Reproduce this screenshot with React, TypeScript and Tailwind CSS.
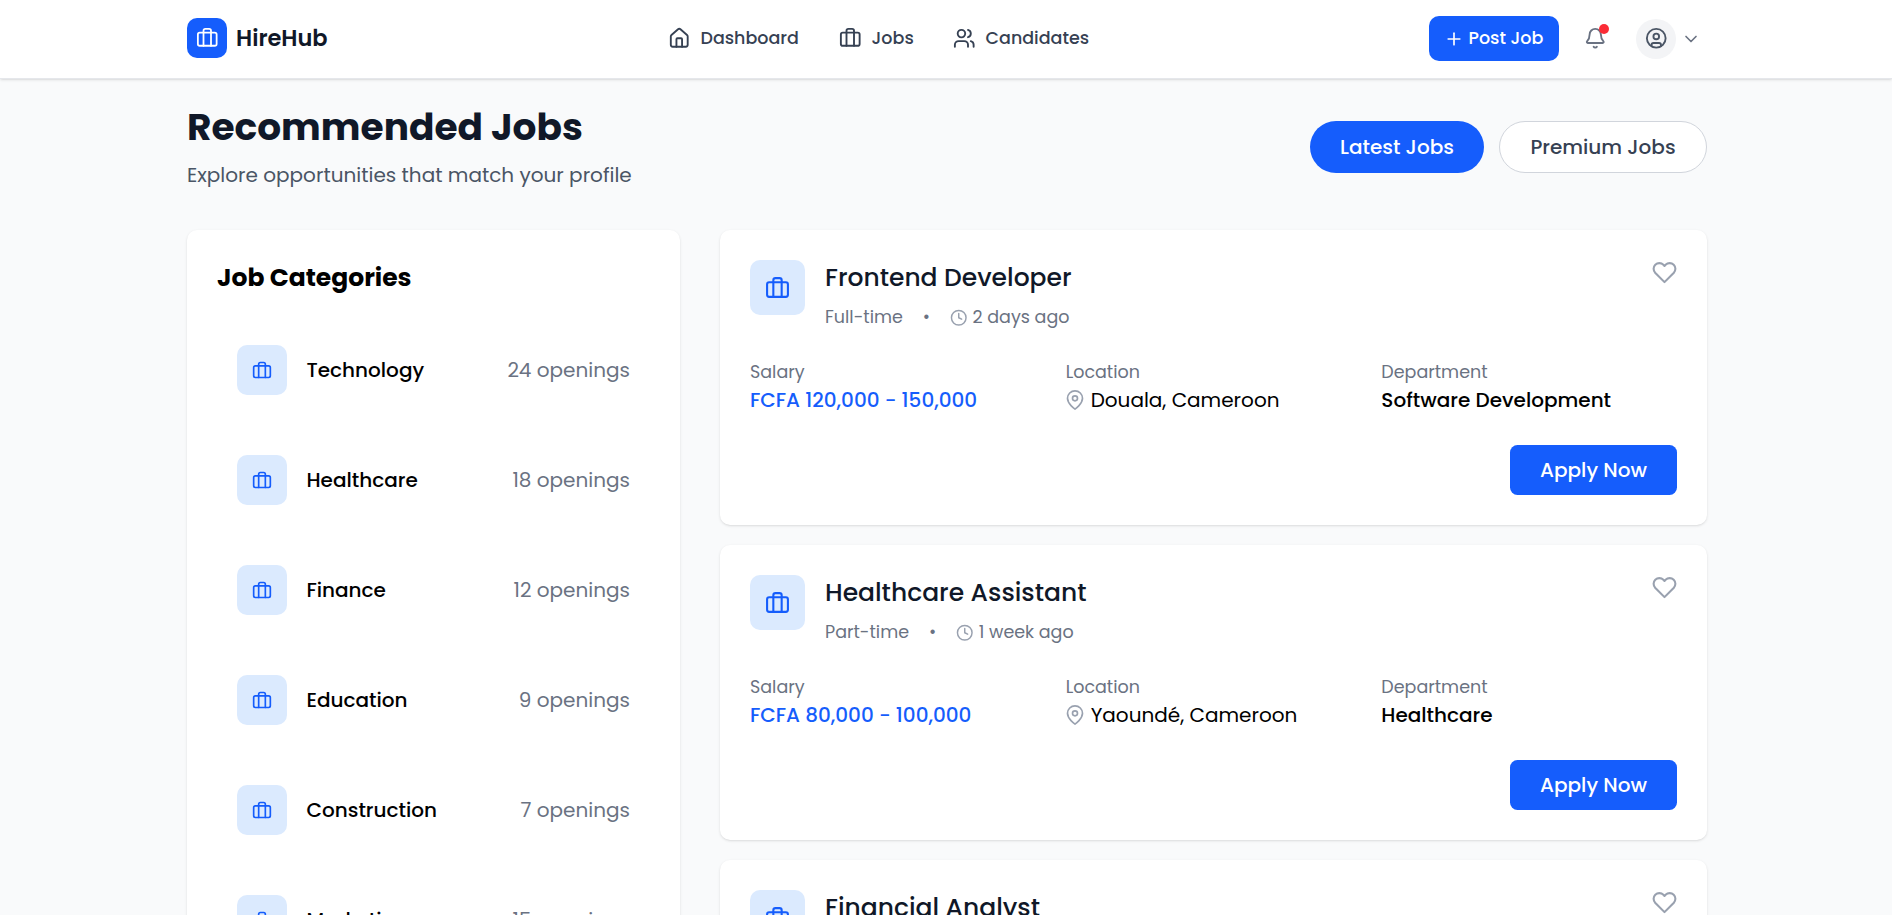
import { Bell, Briefcase, ChevronDown, CircleUser, House, Plus, Users } from "lucide-react";
import { FiBriefcase, FiClock, FiHeart, FiMapPin } from "react-icons/fi";

const categories = [
  { name: "Technology", count: "24 openings" },
  { name: "Healthcare", count: "18 openings" },
  { name: "Finance", count: "12 openings" },
  { name: "Education", count: "9 openings" },
  { name: "Construction", count: "7 openings" },
  { name: "Marketing", count: "15 openings" },
];

const jobs = [
  {
    title: "Frontend Developer",
    type: "Full-time",
    posted: "2 days ago",
    salary: "FCFA 120,000 - 150,000",
    location: "Douala, Cameroon",
    department: "Software Development",
  },
  {
    title: "Healthcare Assistant",
    type: "Part-time",
    posted: "1 week ago",
    salary: "FCFA 80,000 - 100,000",
    location: "Yaoundé, Cameroon",
    department: "Healthcare",
  },
  { title: "Financial Analyst" },
];

type Job = (typeof jobs)[number];

function Header() {
  return (
    <header className="relative h-[79px] shrink-0 border-b border-gray-200 bg-white shadow-sm">
      <div className="ml-[187px] flex h-[77px] w-[1520px] items-center">
        <div className="flex w-[481px] items-center gap-[9px]">
          <div className="-mt-px flex size-10 items-center justify-center rounded-[10px] bg-[#155dfc] text-white">
            <Briefcase size={22.5} strokeWidth={1.9} />
          </div>
          <span className="text-[22.5px] font-semibold text-gray-900">HireHub</span>
        </div>
        <nav className="flex gap-10 text-[17.5px] font-medium text-gray-700">
          <a className="flex w-[131px] items-center gap-[10px]">
            <House size={22.5} className="shrink-0" />
            <span>Dashboard</span>
          </a>
          <a className="flex w-[74px] items-center gap-[10px]">
            <Briefcase size={22.5} className="shrink-0" />
            <span>Jobs</span>
          </a>
          <a className="flex items-center gap-[10px]">
            <Users size={22.5} className="shrink-0" />
            <span>Candidates</span>
          </a>
        </nav>
        <div className="ml-auto flex items-center pr-[6px]">
          <button className="flex h-[45px] w-[130px] items-center gap-[5px] rounded-[10px] bg-[#155dfc] pl-[15px] text-[17.5px] font-medium text-white">
            <Plus size={20} className="shrink-0" />
            <span className="whitespace-nowrap">Post Job</span>
          </button>
          <button className="relative ml-[25px] text-gray-500">
            <Bell size={22.5} />
            <span className="absolute -right-[2.5px] -top-[3px] size-[10px] rounded-full bg-[#fb2c36]" />
          </button>
          <div className="ml-[30px] flex size-10 items-center justify-center rounded-full bg-gray-100 text-gray-600">
            <CircleUser size={22.5} />
          </div>
          <ChevronDown size={20} className="ml-[5px] text-gray-500" />
        </div>
      </div>
    </header>
  );
}

function PageHeading() {
  return (
    <div className="flex items-center justify-between">
      <div>
        <h1 className="text-[37.5px] leading-[45px] font-bold text-gray-900">Recommended Jobs</h1>
        <p className="mt-[10px] text-[20px] leading-[30px] text-gray-600">
          Explore opportunities that match your profile
        </p>
      </div>
      <div className="mb-px flex gap-[15px] text-[20px] font-medium">
        <button className="h-[52px] w-[174px] rounded-full bg-[#155dfc] text-white">Latest Jobs</button>
        <button className="h-[52px] w-[208px] rounded-full border border-gray-300 bg-white text-gray-700">
          Premium Jobs
        </button>
      </div>
    </div>
  );
}

function CategoryPanel() {
  return (
    <aside className="w-[493px] shrink-0 rounded-[10px] bg-white p-[30px] shadow-sm">
      <h2 className="mb-[30px] text-[25px] leading-[35px] font-bold text-black">Job Categories</h2>
      <ul className="flex flex-col gap-5">
        {categories.map((c) => (
          <li key={c.name} className="flex h-[90px] items-center px-5 text-[20px] leading-[30px]">
            <div className="flex size-[50px] items-center justify-center rounded-[10px] bg-blue-100 text-[#155dfc]">
              <FiBriefcase size={20} />
            </div>
            <span className="ml-[19.5px] font-medium text-black">{c.name}</span>
            <span className="ml-auto text-gray-500">{c.count}</span>
          </li>
        ))}
      </ul>
    </aside>
  );
}

function JobCard({ job }: { job: Job }) {
  return (
    <article className="min-h-[295px] rounded-[10px] bg-white p-[30px] shadow-sm">
      <div className="flex items-start">
        <div className="flex size-[55px] items-center justify-center rounded-[10px] bg-blue-100 text-[#155dfc]">
          <FiBriefcase size={25} />
        </div>
        <div className="ml-5">
          <h3 className="text-[25px] leading-[35px] font-medium text-gray-900">{job.title}</h3>
          {job.type && (
            <div className="mt-[10px] flex h-[25px] items-center gap-5 text-[17.5px] text-gray-500">
              <span>{job.type}</span>
              <span>•</span>
              <span className="flex items-center gap-[5px]">
                <FiClock size={17.5} className="text-gray-400" />
                <span>{job.posted}</span>
              </span>
            </div>
          )}
        </div>
        <FiHeart size={25} className="ml-auto text-gray-400" />
      </div>
      {job.salary && (
        <>
          <div className="mt-[30px] grid grid-cols-3 gap-5 text-[20px] leading-[30px]">
            <div>
              <p className="text-[17.5px] leading-[25px] text-gray-500">Salary</p>
              <p className="font-medium text-[#155dfc]">{job.salary}</p>
            </div>
            <div>
              <p className="text-[17.5px] leading-[25px] text-gray-500">Location</p>
              <p className="flex items-center gap-[6px] text-black">
                <FiMapPin size={20} className="-ml-px text-gray-400" />
                <span>{job.location}</span>
              </p>
            </div>
            <div>
              <p className="text-[17.5px] leading-[25px] text-gray-500">Department</p>
              <p className="font-medium text-black">{job.department}</p>
            </div>
          </div>
          <div className="mt-[30px] flex justify-end">
            <button className="h-[50px] w-[167px] rounded-[7.5px] bg-[#155dfc] text-[20px] font-medium text-white">
              Apply Now
            </button>
          </div>
        </>
      )}
    </article>
  );
}

export default function App() {
  return (
    <div className="flex h-[915px] flex-col overflow-hidden bg-gray-50 font-[Poppins,Inter,sans-serif]">
      <Header />
      <main className="ml-[187px] w-[1520px] pt-[26px]">
        <PageHeading />
        <div className="mt-10 flex gap-10">
          <CategoryPanel />
          <section className="flex flex-1 flex-col gap-5">
            {jobs.map((job) => (
              <JobCard key={job.title} job={job} />
            ))}
          </section>
        </div>
      </main>
    </div>
  );
}
